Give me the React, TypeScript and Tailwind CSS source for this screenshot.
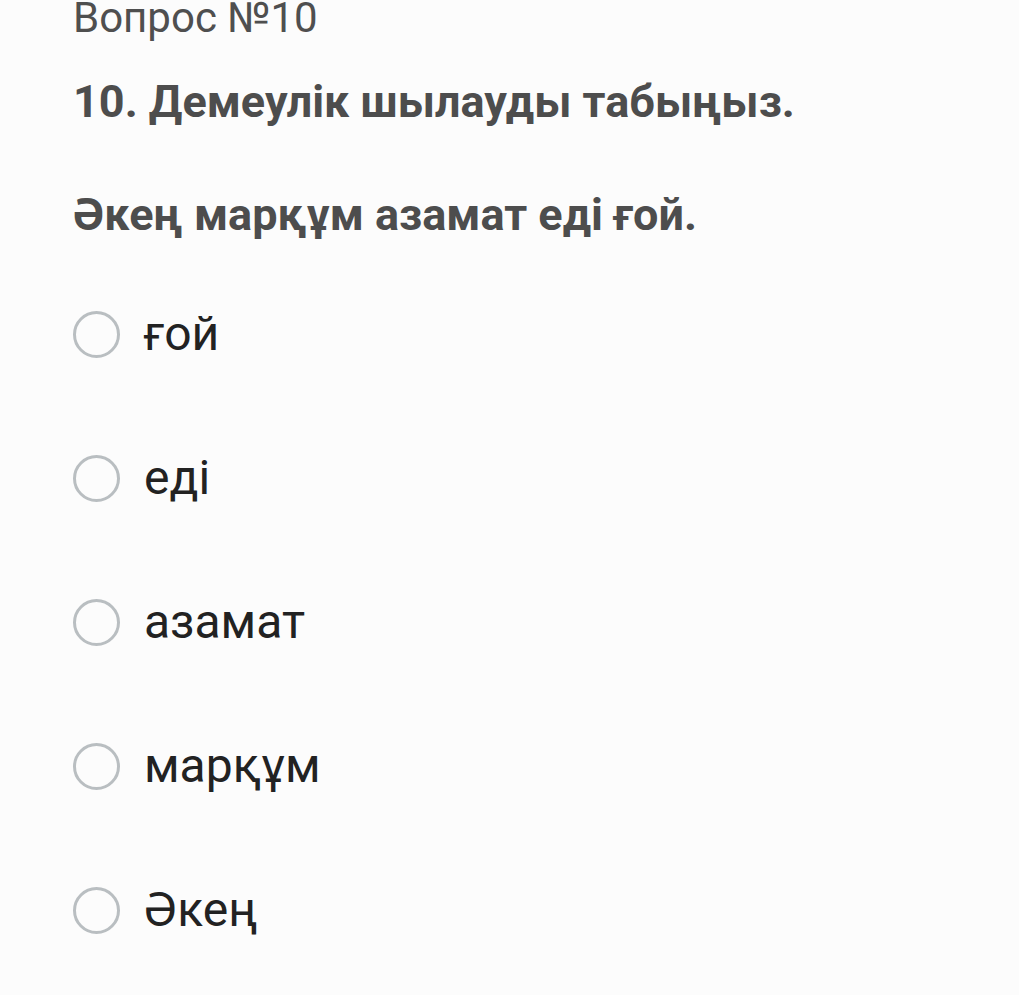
import { useState } from "react";

const options = ["ғой", "еді", "азамат", "марқұм", "Әкең"];

export default function App() {
  const [picked, setPicked] = useState<number | null>(null);

  return (
    <div
      className="min-h-screen w-full bg-[#fcfcfc] pl-[73px]"
      style={{ fontFamily: "Roboto, 'Noto Sans', sans-serif" }}
    >
      <div className="mt-[-3px] text-[42px] leading-[42px] text-[#4f4f4f]">Вопрос №10</div>
      <div className="mt-[40px] text-[45px] leading-[45px] font-bold text-[#4d4d4d]">
        10. Демеулік шылауды табыңыз.
      </div>
      <div className="mt-[68px] text-[45px] leading-[45px] font-bold text-[#4d4d4d]">
        Әкең марқұм азамат еді ғой.
      </div>

      <div className="mt-[73px] flex flex-col gap-[96px]">
        {options.map((o, i) => (
          <label
            key={o}
            className="flex h-[48px] cursor-pointer items-center gap-[24px]"
            onClick={() => setPicked(i)}
          >
            <span
              className={`box-border h-[47px] w-[47px] shrink-0 rounded-full border-[3px] ${
                picked === i ? "border-[#3b82f6]" : "border-[#b9bec1]"
              } bg-[#fcfcfc]`}
            />
            <span className="text-[48px] leading-[48px] text-[#222222]">{o}</span>
          </label>
        ))}
      </div>
    </div>
  );
}
